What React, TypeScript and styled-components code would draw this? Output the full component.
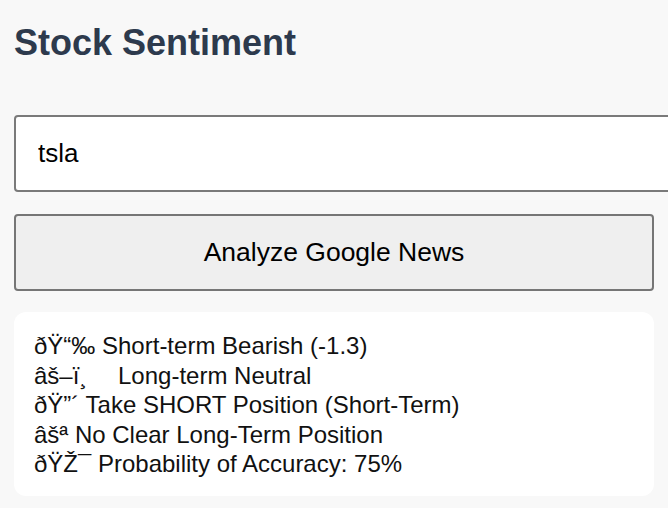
import React, { useState } from 'react'
import styled, { createGlobalStyle } from 'styled-components'

const GlobalStyle = createGlobalStyle`
  html, body {
    margin: 0;
    padding: 0;
    background: #f8f8f8;
    overflow: hidden;
  }
  body {
    font-family: 'Liberation Sans', Arial, Helvetica, sans-serif;
  }
`

const Page = styled.div`
  padding: 22px 14px;
`

const Title = styled.h1`
  margin: 0 0 52px;
  font-size: 36px;
  line-height: 41px;
  font-weight: 700;
  color: #2d3a4d;
`

// the field is wider than the page on purpose, as in the app
const TickerInput = styled.input`
  display: block;
  width: 100%;
  height: 73px;
  margin: 0 0 22px;
  padding: 0 22px;
  border: 2px solid #7a7a7a;
  border-radius: 4px;
  background: #ffffff;
  font-family: inherit;
  font-size: 26px;
  color: #000000;
  outline: none;
`

const AnalyzeButton = styled.button`
  display: block;
  width: 100%;
  height: 77px;
  margin: 0 0 21px;
  border: 2px solid #767676;
  border-radius: 4px;
  background: #efefef;
  font-family: inherit;
  font-size: 26.5px;
  color: #000000;
  cursor: pointer;
`

const ResultCard = styled.div`
  background: #ffffff;
  border-radius: 12px;
  padding: 19px 20px 17px;
`

const ResultLine = styled.div`
  font-size: 24px;
  line-height: 29.5px;
  color: #111111;
  white-space: pre;
`

// text as the page shows it (utf-8 emoji read as cp1252)
const results = [
  '\u00F0\u0178\u201C\u2030 Short-term Bearish (-1.3)',
  '\u00E2\u0161\u2013\u00EF\u00B8\u2003 Long-term Neutral',
  '\u00F0\u0178\u201D\u00B4 Take SHORT Position (Short-Term)',
  '\u00E2\u0161\u00AA No Clear Long-Term Position',
  '\u00F0\u0178\u017D\u00AF Probability of Accuracy: 75%',
]

const App: React.FC = () => {
  const [ticker, setTicker] = useState('tsla')

  return (
    <Page>
      <GlobalStyle />
      <Title>Stock Sentiment</Title>
      <TickerInput value={ticker} onChange={(e) => setTicker(e.target.value)} />
      <AnalyzeButton>Analyze Google News</AnalyzeButton>
      <ResultCard>
        {results.map((line) => (
          <ResultLine key={line}>{line}</ResultLine>
        ))}
      </ResultCard>
    </Page>
  )
}

export default App
